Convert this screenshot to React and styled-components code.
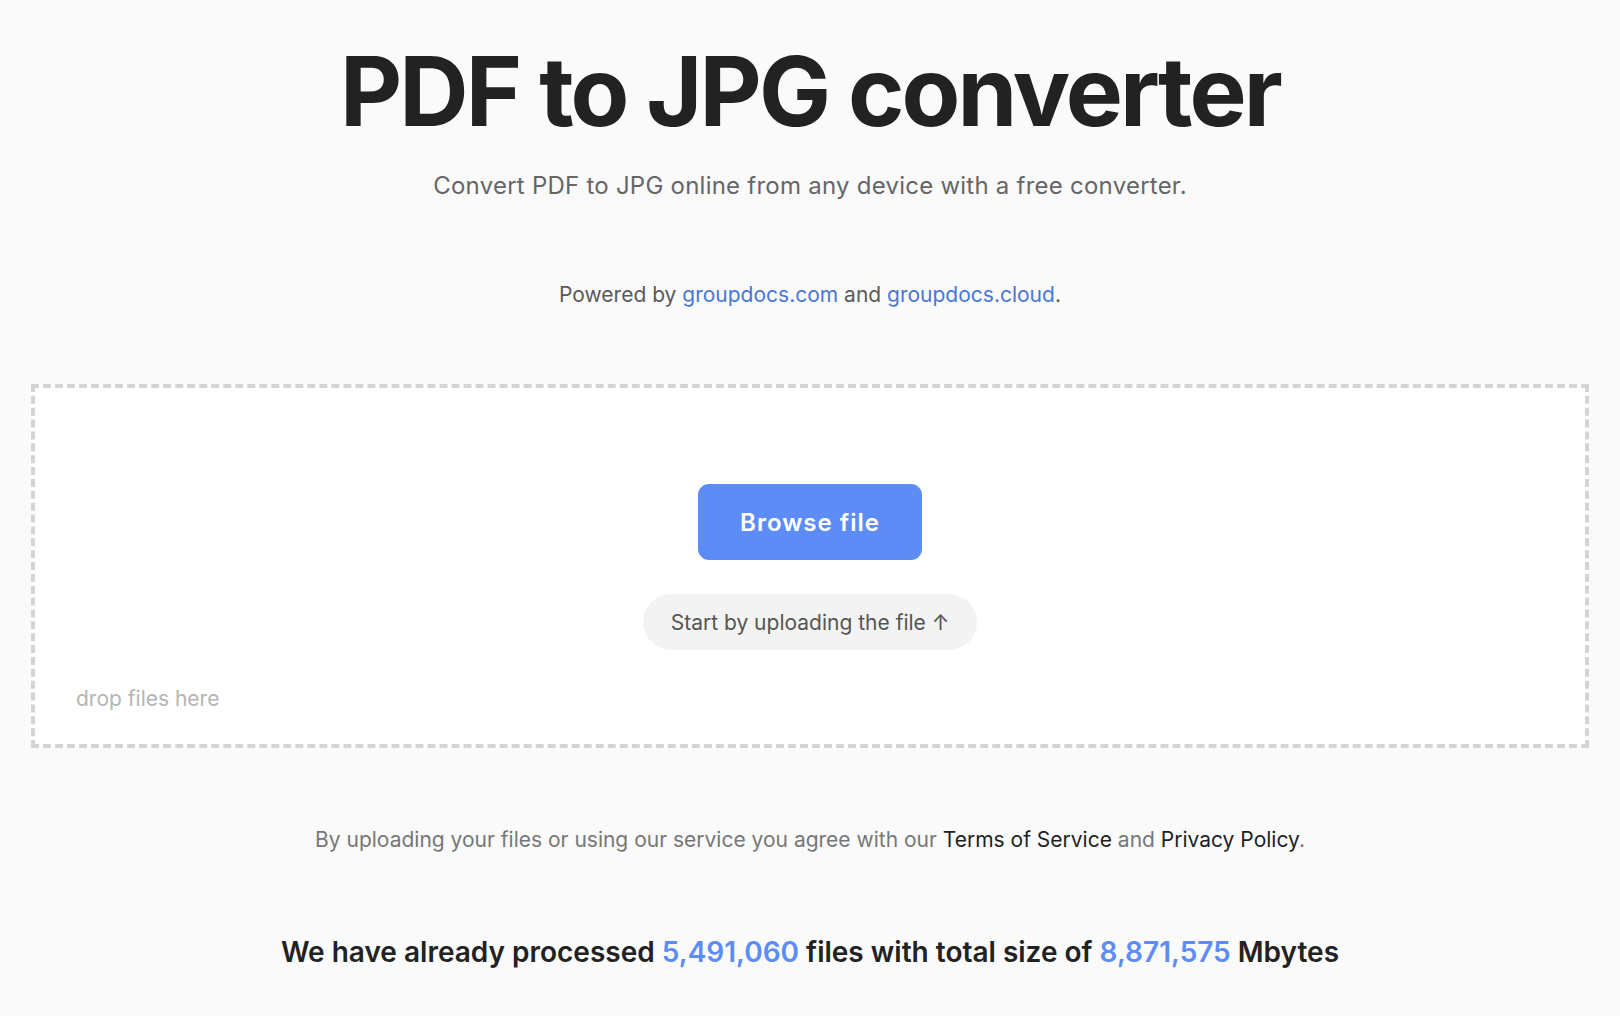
import React from "react";
import styled, { createGlobalStyle } from "styled-components";

const Global = createGlobalStyle`
  html, body { margin: 0; padding: 0; background: #fafafa; }
  body { font-family: Inter, "Noto Sans", sans-serif; color: #222; }
  * { box-sizing: border-box; }
`;

const Page = styled.main`
  display: flex;
  flex-direction: column;
  align-items: center;
  padding: 31px 31px 40px;
  min-height: 1016px;
`;

const Title = styled.h1`
  margin: 0;
  font-size: 96px;
  line-height: 120px;
  font-weight: 700;
  letter-spacing: -0.03em;
  color: #222;
  text-align: center;
`;

const Subtitle = styled.p`
  margin: 19px 0 0;
  font-size: 24px;
  line-height: 32px;
  letter-spacing: 0.24px;
  color: #666;
  text-align: center;
`;

const Powered = styled.p`
  margin: 79px 0 0;
  font-size: 21px;
  line-height: 28px;
  color: #5a5a5a;
  text-align: center;
`;

const Link = styled.a`
  color: ${(p) => (p.$dark ? "#1f1f1f" : "#4a76d6")};
  text-decoration: none;
`;

const DropZone = styled.section`
  align-self: stretch;
  margin-top: 75px;
  border: 4px dashed #d4d4d4;
  background: #fff;
  display: flex;
  flex-direction: column;
  align-items: center;
  padding: 96px 41px 31px;
`;

const BrowseButton = styled.button`
  width: 224px;
  height: 76px;
  border: none;
  border-radius: 11px;
  background: #5d8cf7;
  color: #fff;
  font-family: Inter, sans-serif;
  font-size: 24px;
  font-weight: 600;
  letter-spacing: 1px;
  cursor: pointer;
`;

const Hint = styled.div`
  margin-top: 34px;
  height: 56px;
  padding: 0 28px;
  border-radius: 28px;
  background: #f3f3f3;
  color: #555;
  font-size: 21px;
  display: flex;
  align-items: center;
`;

const DropText = styled.div`
  align-self: flex-start;
  margin-top: 35px;
  font-size: 21px;
  line-height: 28px;
  color: #b5b5b5;
`;

const Terms = styled.p`
  margin: 78px 0 0;
  font-size: 21px;
  line-height: 28px;
  color: #777;
  text-align: center;
`;

const Stats = styled.p`
  margin: 80px 0 0;
  font-size: 28px;
  line-height: 36px;
  font-weight: 600;
  color: #222;
  text-align: center;
`;

const Num = styled.span`
  color: #5d8cf7;
`;

export default function App() {
  return (
    <>
      <Global />
      <Page>
        <Title>PDF to JPG converter</Title>
        <Subtitle>Convert PDF to JPG online from any device with a free converter.</Subtitle>
        <Powered>
          Powered by <Link href="#">groupdocs.com</Link> and <Link href="#">groupdocs.cloud</Link>.
        </Powered>
        <DropZone>
          <BrowseButton>Browse file</BrowseButton>
          <Hint>Start by uploading the file ↑</Hint>
          <DropText>drop files here</DropText>
        </DropZone>
        <Terms>
          By uploading your files or using our service you agree with our{" "}
          <Link $dark href="#">Terms of Service</Link> and <Link $dark href="#">Privacy Policy</Link>.
        </Terms>
        <Stats>
          We have already processed <Num>5,491,060</Num> files with total size of <Num>8,871,575</Num> Mbytes
        </Stats>
      </Page>
    </>
  );
}
